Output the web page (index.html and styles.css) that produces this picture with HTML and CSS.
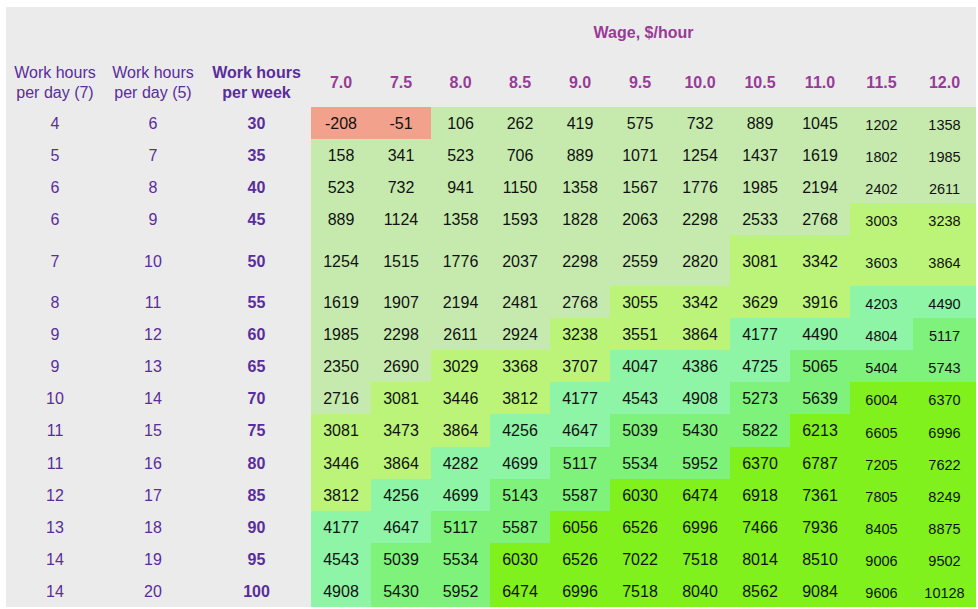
FILE: index.html
```html
<!DOCTYPE html>
<html>
<head>
<meta charset="utf-8">
<link rel="stylesheet" href="styles.css">
</head>
<body>
<div class="panel">
<table class="grid">
<colgroup>
<col class="w98"><col class="w98"><col class="w109">
<col class="w60"><col class="w60"><col class="w59"><col class="w60"><col class="w60"><col class="w60"><col class="w60"><col class="w60"><col class="w60"><col class="w63"><col class="w63">
</colgroup>
<thead>
<tr class="h1">
<th></th><th></th><th></th>
<th colspan="11" class="wage">Wage, $/hour</th>
</tr>
<tr class="h2">
<th class="lab">Work hours<br>per day (7)</th>
<th class="lab">Work hours<br>per day (5)</th>
<th class="lab bold">Work hours<br>per week</th>
<th class="rate">7.0</th><th class="rate">7.5</th><th class="rate">8.0</th><th class="rate">8.5</th><th class="rate">9.0</th><th class="rate">9.5</th><th class="rate">10.0</th><th class="rate">10.5</th><th class="rate">11.0</th><th class="rate">11.5</th><th class="rate">12.0</th>
</tr>
</thead>
<tbody>
<tr><td class="k">4</td><td class="k">6</td><td class="k b">30</td><td class="c0">-208</td><td class="c0">-51</td><td class="c1">106</td><td class="c1">262</td><td class="c1">419</td><td class="c1">575</td><td class="c1">732</td><td class="c1">889</td><td class="c1">1045</td><td class="c1 sm">1202</td><td class="c1 sm">1358</td></tr>
<tr><td class="k">5</td><td class="k">7</td><td class="k b">35</td><td class="c1">158</td><td class="c1">341</td><td class="c1">523</td><td class="c1">706</td><td class="c1">889</td><td class="c1">1071</td><td class="c1">1254</td><td class="c1">1437</td><td class="c1">1619</td><td class="c1 sm">1802</td><td class="c1 sm">1985</td></tr>
<tr><td class="k">6</td><td class="k">8</td><td class="k b">40</td><td class="c1">523</td><td class="c1">732</td><td class="c1">941</td><td class="c1">1150</td><td class="c1">1358</td><td class="c1">1567</td><td class="c1">1776</td><td class="c1">1985</td><td class="c1">2194</td><td class="c1 sm">2402</td><td class="c1 sm">2611</td></tr>
<tr><td class="k">6</td><td class="k">9</td><td class="k b">45</td><td class="c1">889</td><td class="c1">1124</td><td class="c1">1358</td><td class="c1">1593</td><td class="c1">1828</td><td class="c1">2063</td><td class="c1">2298</td><td class="c1">2533</td><td class="c1">2768</td><td class="c2 sm">3003</td><td class="c2 sm">3238</td></tr>
<tr class="tall"><td class="k">7</td><td class="k">10</td><td class="k b">50</td><td class="c1">1254</td><td class="c1">1515</td><td class="c1">1776</td><td class="c1">2037</td><td class="c1">2298</td><td class="c1">2559</td><td class="c1">2820</td><td class="c2">3081</td><td class="c2">3342</td><td class="c2 sm">3603</td><td class="c2 sm">3864</td></tr>
<tr><td class="k">8</td><td class="k">11</td><td class="k b">55</td><td class="c1">1619</td><td class="c1">1907</td><td class="c1">2194</td><td class="c1">2481</td><td class="c1">2768</td><td class="c2">3055</td><td class="c2">3342</td><td class="c2">3629</td><td class="c2">3916</td><td class="c3 sm">4203</td><td class="c3 sm">4490</td></tr>
<tr><td class="k">9</td><td class="k">12</td><td class="k b">60</td><td class="c1">1985</td><td class="c1">2298</td><td class="c1">2611</td><td class="c1">2924</td><td class="c2">3238</td><td class="c2">3551</td><td class="c2">3864</td><td class="c3">4177</td><td class="c3">4490</td><td class="c3 sm">4804</td><td class="c4 sm">5117</td></tr>
<tr><td class="k">9</td><td class="k">13</td><td class="k b">65</td><td class="c1">2350</td><td class="c1">2690</td><td class="c2">3029</td><td class="c2">3368</td><td class="c2">3707</td><td class="c3">4047</td><td class="c3">4386</td><td class="c3">4725</td><td class="c4">5065</td><td class="c4 sm">5404</td><td class="c4 sm">5743</td></tr>
<tr><td class="k">10</td><td class="k">14</td><td class="k b">70</td><td class="c1">2716</td><td class="c2">3081</td><td class="c2">3446</td><td class="c2">3812</td><td class="c3">4177</td><td class="c3">4543</td><td class="c3">4908</td><td class="c4">5273</td><td class="c4">5639</td><td class="c5 sm">6004</td><td class="c5 sm">6370</td></tr>
<tr class="r33"><td class="k">11</td><td class="k">15</td><td class="k b">75</td><td class="c2">3081</td><td class="c2">3473</td><td class="c2">3864</td><td class="c3">4256</td><td class="c3">4647</td><td class="c4">5039</td><td class="c4">5430</td><td class="c4">5822</td><td class="c5">6213</td><td class="c5 sm">6605</td><td class="c5 sm">6996</td></tr>
<tr><td class="k">11</td><td class="k">16</td><td class="k b">80</td><td class="c2">3446</td><td class="c2">3864</td><td class="c3">4282</td><td class="c3">4699</td><td class="c4">5117</td><td class="c4">5534</td><td class="c4">5952</td><td class="c5">6370</td><td class="c5">6787</td><td class="c5 sm">7205</td><td class="c5 sm">7622</td></tr>
<tr><td class="k">12</td><td class="k">17</td><td class="k b">85</td><td class="c2">3812</td><td class="c3">4256</td><td class="c3">4699</td><td class="c4">5143</td><td class="c4">5587</td><td class="c5">6030</td><td class="c5">6474</td><td class="c5">6918</td><td class="c5">7361</td><td class="c5 sm">7805</td><td class="c5 sm">8249</td></tr>
<tr><td class="k">13</td><td class="k">18</td><td class="k b">90</td><td class="c3">4177</td><td class="c3">4647</td><td class="c4">5117</td><td class="c4">5587</td><td class="c5">6056</td><td class="c5">6526</td><td class="c5">6996</td><td class="c5">7466</td><td class="c5">7936</td><td class="c5 sm">8405</td><td class="c5 sm">8875</td></tr>
<tr><td class="k">14</td><td class="k">19</td><td class="k b">95</td><td class="c3">4543</td><td class="c4">5039</td><td class="c4">5534</td><td class="c5">6030</td><td class="c5">6526</td><td class="c5">7022</td><td class="c5">7518</td><td class="c5">8014</td><td class="c5">8510</td><td class="c5 sm">9006</td><td class="c5 sm">9502</td></tr>
<tr><td class="k">14</td><td class="k">20</td><td class="k b">100</td><td class="c3">4908</td><td class="c4">5430</td><td class="c4">5952</td><td class="c5">6474</td><td class="c5">6996</td><td class="c5">7518</td><td class="c5">8040</td><td class="c5">8562</td><td class="c5">9084</td><td class="c5 sm">9606</td><td class="c5 sm">10128</td></tr>
</tbody>
</table>
</div>
</body>
</html>
```

FILE: styles.css
```css
html, body {
  margin: 0;
  padding: 0;
  background: #ffffff;
}
body {
  font-family: "Liberation Sans", Arial, Helvetica, sans-serif;
  font-size: 16px;
}
.panel {
  padding: 7px 2px 0 6px;
}
.grid {
  border-collapse: collapse;
  border-spacing: 0;
  table-layout: fixed;
  width: 970px;
  background: #ebebeb;
}
.w98 { width: 98px; }
.w109 { width: 109px; }
.w59 { width: 59px; }
.w60 { width: 60px; }
.w63 { width: 63px; }
.grid th, .grid td {
  padding: 0;
  text-align: center;
  vertical-align: middle;
  font-weight: normal;
  white-space: nowrap;
  line-height: 20px;
}
.h1 { height: 50px; }
.h2 { height: 50px; }
.wage {
  color: #993a99;
  font-weight: bold !important;
  padding-top: 1px !important;
}
.lab {
  color: #5a2d9c;
  padding-top: 1px !important;
}
.lab.bold { font-weight: bold !important; }
.rate {
  color: #993a99;
  font-weight: bold !important;
  padding-top: 1px !important;
}
tbody tr { height: 32px; }
.grid tbody td { padding-top: 1px; }
.grid tbody tr.tall td { padding-top: 3px; }
tbody tr.tall { height: 51px; }
tbody tr.r33 { height: 33px; }
.k { color: #5a2d9c; }
.k.b { font-weight: bold; }
td.c0, td.c1, td.c2, td.c3, td.c4, td.c5 { color: #111111; }
.c0 { background: #f2a18d; }
.c1 { background: #c6eaae; }
.c2 { background: #bcf47a; }
.c3 { background: #8ef4a6; }
.c4 { background: #7ff27c; }
.c5 { background: #80f11c; }
.grid td.sm {
  font-size: 14.5px;
  padding-top: 4px;
}
.grid tbody tr.tall td.sm { padding-top: 5px; }
```
